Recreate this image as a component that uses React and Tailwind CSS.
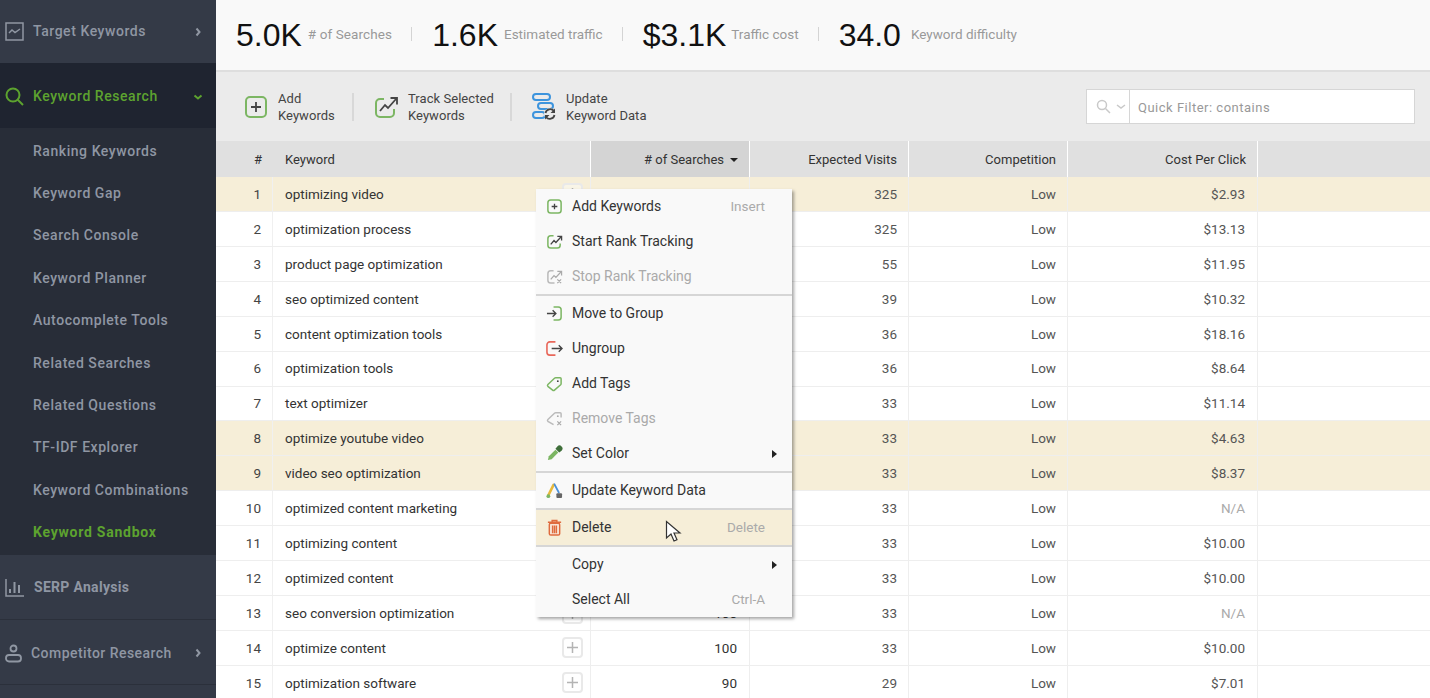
import React from "react";

const rows = [
  ["optimizing video", "1,000", "325", "Low", "$2.93", true],
  ["optimization process", "1,000", "325", "Low", "$13.13"],
  ["product page optimization", "170", "55", "Low", "$11.95"],
  ["seo optimized content", "120", "39", "Low", "$10.32"],
  ["content optimization tools", "110", "36", "Low", "$18.16"],
  ["optimization tools", "110", "36", "Low", "$8.64"],
  ["text optimizer", "100", "33", "Low", "$11.14"],
  ["optimize youtube video", "100", "33", "Low", "$4.63", true],
  ["video seo optimization", "100", "33", "Low", "$8.37", true],
  ["optimized content marketing", "100", "33", "Low", "N/A"],
  ["optimizing content", "100", "33", "Low", "$10.00"],
  ["optimized content", "100", "33", "Low", "$10.00"],
  ["seo conversion optimization", "100", "33", "Low", "N/A"],
  ["optimize content", "100", "33", "Low", "$10.00"],
  ["optimization software", "90", "29", "Low", "$7.01"],
];

const subItems = ["Ranking Keywords", "Keyword Gap", "Search Console", "Keyword Planner", "Autocomplete Tools", "Related Searches", "Related Questions", "TF-IDF Explorer", "Keyword Combinations"];

const Chevron = ({ down, color = "#9097a3" }) => (
  <svg width="10" height="10" viewBox="0 0 10 10" fill="none" stroke={color} strokeWidth="2">
    {down ? <path d="M1.500 3.500 5 6.500 8.500 3.500" /> : <path d="M3.500 1.500 6.500 5 3.500 8.500" />}
  </svg>
);

const Plus = () => (
  <div className="w-[21px] h-[21px] border-2 border-[#e9e9e9] rounded-[4px] flex items-center justify-center bg-white/40">
    <svg width="13" height="13" viewBox="0 0 13 13" stroke="#b4b4b4" strokeWidth="1.500"><path d="M6.500 1v11M1 6.500h11" /></svg>
  </div>
);

const Stat = ({ value, label, gap = "ml-[6px]", last, track = "tracking-[0.1px]" }) => (
  <div className="flex items-center">
    <span className="pt-[2px] text-[32px] leading-none text-[#111] font-['Liberation_Sans',sans-serif]">{value}</span>
    <span className={`${gap} text-[13.5px] ${track} text-[#999]`}>{label}</span>
    {!last && <span className="ml-[19px] mr-[20px] w-px h-[14px] bg-[#d4d4d4]" />}
  </div>
);

const ToolSep = () => <span className="w-[2px] h-[28px] bg-[#d8d8d8]" />;

const ToolBtn = ({ icon, a, b, w }) => (
  <div className={`flex items-center ${w}`}>
    {icon}
    <div className="pt-[1px] text-[13px] leading-[17px] text-[#444] tracking-[0.05px]"><div>{a}</div><div>{b}</div></div>
  </div>
);

const G = "#7cb663";
const D = "#444";

const MI = {
  add: <g><rect x="2" y="2" width="14" height="14" rx="3" fill="none" stroke={G} strokeWidth="1.600" /><path d="M9 6v6M6 9h6" stroke={D} strokeWidth="1.400" /></g>,
  track: <g fill="none"><path d="M8 3H5a3 3 0 0 0-3 3v7a3 3 0 0 0 3 3h7a3 3 0 0 0 3-3v-2" stroke={G} strokeWidth="1.600" /><path d="M5 12l3.500-4 2 2L16 4M12 3.500h4.500V8" stroke={D} strokeWidth="1.400" /></g>,
  stop: <g fill="none"><path d="M8 3H5a3 3 0 0 0-3 3v7a3 3 0 0 0 3 3h4" stroke="#bbb" strokeWidth="1.600" /><path d="M5 12l3.500-4 2 2L16 4M12 3.500h4.500V8M12 12l4 4M16 12l-4 4" stroke="#aaa" strokeWidth="1.300" /></g>,
  move: <g fill="none"><path d="M8 2h5a3 3 0 0 1 3 3v8a3 3 0 0 1-3 3H8" stroke={G} strokeWidth="1.600" /><path d="M1 9h9M7 5.500 10.500 9 7 12.500" stroke={D} strokeWidth="1.400" /></g>,
  ungroup: <g fill="none"><path d="M10 2H4a3 3 0 0 0-3 3v8a3 3 0 0 0 3 3h6" stroke="#e8675a" strokeWidth="1.700" /><path d="M6 9h11M13.500 5.500 17 9l-3.500 3.500" stroke={D} strokeWidth="1.400" /></g>,
  tag: <g fill="none"><path d="M2 10 9 3.500a2 2 0 0 1 1.500-.5H15a1 1 0 0 1 1 1v5a2 2 0 0 1-.5 1.300L9 16a1.500 1.500 0 0 1-2 0L2 12a1.500 1.500 0 0 1 0-2z" stroke={G} strokeWidth="1.600" /><circle cx="12.500" cy="6.500" r="1" fill={D} /></g>,
  untag: <g fill="none"><path d="M8 15.500 2 12a1.500 1.500 0 0 1 0-2L9 3.500a2 2 0 0 1 1.500-.5H15a1 1 0 0 1 1 1v4" stroke="#bbb" strokeWidth="1.600" /><circle cx="12.500" cy="6.500" r="1" fill="#aaa" /><path d="M12 12l4 4M16 12l-4 4" stroke="#aaa" strokeWidth="1.300" /></g>,
  color: <g><path d="M2 16l1-4 7-7 3 3-7 7z" fill={G} /><path d="M10 4l2-2.500a2 2 0 0 1 4.500 4.500L14 8z" fill="#3f6f3a" /></g>,
  update: <g fill="none"><path d="M2.500 14 8 3" stroke="#e7b93c" strokeWidth="2.800" strokeLinecap="round" /><path d="M9 2.500 13.500 11" stroke="#4a90d9" strokeWidth="2" strokeLinecap="round" /><circle cx="2.500" cy="15" r="2" fill={G} /><rect x="11" y="12" width="6" height="5" rx="1" fill="#666" /></g>,
  del: <g fill="none" stroke="#df6b3e" strokeWidth="1.500"><path d="M2 3.500h14M6.500 3V1.500h5V3" /><rect x="3.500" y="4.500" width="11" height="12.500" rx="1.500" fill="#f8e3d4" /><path d="M7 7v8M9 7v8M11 7v8" /></g>,
};

const MenuItem = ({ icon, label, shortcut, arrow, disabled, hover }) => (
  <div className={`h-[35px] flex items-center relative pl-[10px] ${hover ? "bg-[#f6eed8]" : ""}`}>
    <svg width="17" height="17" viewBox="0 0 18 18" className="shrink-0">{MI[icon]}</svg>
    <span className={`absolute left-[36px] -mt-[1px] text-[14px] ${disabled ? "text-[#aaa]" : "text-[#333]"}`}>{label}</span>
    {shortcut && <span className="absolute right-[27px] text-[13.5px] text-[#aaa]">{shortcut}</span>}
    {arrow && <span className="absolute right-[15px] w-0 h-0 border-y-[4px] border-y-transparent border-l-[5px] border-l-[#222]" />}
  </div>
);

const MenuSep = () => <div className="h-[2px] bg-[#d6d6d6]" />;

const headCell = "flex items-center justify-end pt-[2px] border-r border-white";

export default function App() {
  return (
    <div className="w-[1430px] h-[698px] overflow-hidden flex font-['Roboto',sans-serif] bg-white relative">
      <aside className="w-[216px] shrink-0 h-full bg-[#343a47] flex flex-col text-[14px] font-medium tracking-[0.55px] text-[#8f96a3]">
        <div className="h-[63px] flex items-center px-[5px]">
          <svg width="19" height="19" viewBox="0 0 19 19" fill="none" stroke="#9097a3" strokeWidth="1.500"><rect x="1" y="1" width="17" height="17" /><path d="M4 11l3-3 3 2.500L15 7" /></svg>
          <span className="ml-[9px] flex-1">Target Keywords</span>
          <span className="mr-[8px]"><Chevron /></span>
        </div>
        <div className="h-[65px] pt-[2px] flex items-center px-[5px] bg-[#1f2430] text-[#5da32f]">
          <svg width="19" height="19" viewBox="0 0 19 19" fill="none" stroke="#5da32f" strokeWidth="2"><circle cx="8" cy="8" r="6.500" /><path d="M12.500 12.500 18 18" /></svg>
          <span className="ml-[9px] flex-1">Keyword Research</span>
          <span className="mr-[8px]"><Chevron down color="#5da32f" /></span>
        </div>
        <div className="h-[427px] pt-[2px] bg-[#282d38] flex flex-col pl-[33px] text-[#8f96a3]">
          {subItems.map((s) => <div key={s} className="h-[42.4px] shrink-0 flex items-center">{s}</div>)}
          <div className="h-[42.4px] shrink-0 flex items-center text-[#5da32f] font-bold tracking-[0.75px]">Keyword Sandbox</div>
        </div>
        <div className="h-[65px] flex items-center px-[5px] border-b border-[#2b303b]">
          <svg width="19" height="19" viewBox="0 0 19 19" fill="none" stroke="#9097a3" strokeWidth="1.500"><path d="M1 1v17h18" /><path d="M5 15v-4M9.500 15V4M14 15V7" strokeWidth="2" /></svg>
          <span className="ml-[10px] font-bold tracking-[0.3px]">SERP Analysis</span>
        </div>
        <div className="h-[65px] pt-[2px] flex items-center px-[5px] border-b border-[#2b303b]">
          <svg width="17" height="19" viewBox="0 0 17 19" fill="none" stroke="#9097a3" strokeWidth="1.800"><circle cx="8.500" cy="4.500" r="3" /><rect x="1" y="11" width="15" height="6.500" rx="3" /></svg>
          <span className="ml-[9px] flex-1 tracking-[0.45px]">Competitor Research</span>
          <span className="mr-[8px]"><Chevron /></span>
        </div>
      </aside>

      <main className="flex-1 min-w-0 flex flex-col">
        <header className="h-[72px] shrink-0 bg-[#f9f9f9] border-b-2 border-[#dedede] flex items-center pl-[20px] pb-[2px]">
          <Stat value="5.0K" label="# of Searches" />
          <Stat value="1.6K" label="Estimated traffic" track="tracking-normal" />
          <Stat value="$3.1K" label="Traffic cost" gap="ml-[5px]" track="tracking-normal" />
          <Stat value="34.0" label="Keyword difficulty" gap="ml-[10px]" last track="tracking-normal" />
        </header>

        <div className="h-[69px] shrink-0 bg-[#ebebeb] flex items-center pl-[28px] pr-[15px]">
          <ToolBtn w="w-[108px]" a="Add" b="Keywords" icon={<svg width="24" height="24" viewBox="0 0 24 24" fill="none" className="mr-[10px]"><rect x="2" y="2" width="20" height="20" rx="4" stroke={G} strokeWidth="2" /><path d="M12 7v10M7 12h10" stroke={D} strokeWidth="1.800" /></svg>} />
          <ToolSep />
          <div className="w-[20px]" />
          <ToolBtn w="w-[136px]" a="Track Selected" b="Keywords" icon={<svg width="24" height="24" viewBox="0 0 24 24" fill="none" className="mr-[10px]"><path d="M10 4H6a4 4 0 0 0-4 4v10a4 4 0 0 0 4 4h10a4 4 0 0 0 4-4v-4" stroke={G} strokeWidth="2" /><path d="M6 16l5-6 3 3 8-9M16.500 3H23v6.500" stroke={D} strokeWidth="1.800" /></svg>} />
          <ToolSep />
          <div className="w-[20px]" />
          <ToolBtn w="w-[300px]" a="Update" b="Keyword Data" icon={<svg width="24" height="28" viewBox="0 0 24 28" fill="none" className="mr-[10px]"><rect x="1" y="1" width="17" height="6" rx="3" stroke="#3d94dd" strokeWidth="2" /><rect x="6" y="10" width="15" height="6" rx="3" stroke="#3d94dd" strokeWidth="2" /><rect x="1" y="19" width="12" height="6" rx="3" stroke="#3d94dd" strokeWidth="2" /><circle cx="18" cy="21" r="6" fill="#ebebeb" /><path d="M13.500 20a4.800 4.800 0 0 1 8.500-2M22.500 22a4.800 4.800 0 0 1-8.500 2" stroke={D} strokeWidth="1.800" /><path d="M23 15.500V20h-4.500zM13 26.500V22h4.500z" fill={D} /></svg>} />
          <div className="flex-1" />
          <div className="w-[329px] h-[35px] bg-white border border-[#d6d6d6] flex items-center">
            <div className="w-[43px] h-full border-r border-[#d6d6d6] flex items-center pl-[9px] gap-[5px]">
              <svg width="15" height="15" viewBox="0 0 15 15" fill="none" stroke="#c9c9c9" strokeWidth="1.500"><circle cx="6" cy="6" r="4.500" /><path d="M9.500 9.500 14 14" /></svg>
              <svg width="10" height="8" viewBox="0 0 10 8" fill="none" stroke="#c9c9c9" strokeWidth="1.500"><path d="M1 2l4 3 4-3" /></svg>
            </div>
            <span className="ml-[8px] pt-[2px] text-[13px] tracking-[0.5px] text-[#999]">Quick Filter: contains</span>
          </div>
        </div>

        <div className="h-[36px] shrink-0 grid grid-cols-[57px_318px_159px_159px_159px_190px_1fr] text-[13px] text-[#333] bg-[#e0e0e0]">
          <div className="flex items-center justify-end pt-[2px] pr-[11px]">#</div>
          <div className="flex items-center pt-[2px] pl-[12px] border-r border-white">Keyword</div>
          <div className={`${headCell} pr-[11px] bg-[#d4d4d4]`}>
            # of Searches
            <span className="ml-[6px] w-0 h-0 border-x-[4px] border-x-transparent border-t-[4px] border-t-[#222]" />
          </div>
          <div className={`${headCell} pr-[11px]`}>Expected Visits</div>
          <div className={`${headCell} pr-[11px]`}>Competition</div>
          <div className={`${headCell} pr-[11px]`}>Cost Per Click</div>
          <div />
        </div>

        <div className="flex-1 min-h-0">
          {rows.map((r, i) => (
            <div key={i} className={`h-[34.93px] grid grid-cols-[57px_318px_159px_159px_159px_190px_1fr] text-[13.5px] border-b border-[#eeeeee] ${r[5] ? "bg-[#f6eed8]" : "bg-white"}`}>
              <div className="flex items-center justify-end pr-[11px] text-[#444] border-r border-[#f0f0f0]">{i + 1}</div>
              <div className="flex items-center justify-between pl-[12px] pr-[7px] text-[#333] border-r border-[#eeeeee]">
                <span>{r[0]}</span>
                <Plus />
              </div>
              <div className="flex items-center justify-end pr-[12px] text-[#333] border-r border-[#eeeeee]">{r[1]}</div>
              <div className="flex items-center justify-end pr-[11px] text-[#555] border-r border-[#eeeeee]">{r[2]}</div>
              <div className="flex items-center justify-end pr-[11px] text-[#555] border-r border-[#eeeeee]">{r[3]}</div>
              <div className={`flex items-center justify-end pr-[12px] border-r border-[#eeeeee] ${r[4] === "N/A" ? "text-[#aaa]" : "text-[#555]"}`}>{r[4]}</div>
              <div />
            </div>
          ))}
        </div>
      </main>

      <div className="absolute left-[536px] top-[189px] w-[256px] bg-[#f9f9f9] shadow-[2px_2px_3px_rgba(0,0,0,0.35)]">
        <MenuItem icon="add" label="Add Keywords" shortcut="Insert" />
        <MenuItem icon="track" label="Start Rank Tracking" />
        <MenuItem icon="stop" label="Stop Rank Tracking" disabled />
        <MenuSep />
        <MenuItem icon="move" label="Move to Group" />
        <MenuItem icon="ungroup" label="Ungroup" />
        <MenuItem icon="tag" label="Add Tags" />
        <MenuItem icon="untag" label="Remove Tags" disabled />
        <MenuItem icon="color" label="Set Color" arrow />
        <MenuSep />
        <MenuItem icon="update" label="Update Keyword Data" />
        <MenuSep />
        <MenuItem icon="del" label="Delete" shortcut="Delete" hover />
        <MenuSep />
        <div className="h-[35px] flex items-center relative"><span className="absolute left-[36px] -mt-[1px] text-[14px] text-[#333]">Copy</span><span className="absolute right-[15px] w-0 h-0 border-y-[4px] border-y-transparent border-l-[5px] border-l-[#222]" /></div>
        <div className="h-[35px] flex items-center relative"><span className="absolute left-[36px] -mt-[1px] text-[14px] text-[#333]">Select All</span><span className="absolute right-[27px] text-[13.5px] text-[#aaa]">Ctrl-A</span></div>
      </div>

      <svg width="17" height="23" viewBox="0 0 17 23" className="absolute left-[665px] top-[520px]">
        <path d="M1.500 1.500v16.500l4.500-4 3 7 3-1.300-3-6.700h6z" fill="#fff" stroke="#333" strokeWidth="1.200" />
      </svg>
    </div>
  );
}
